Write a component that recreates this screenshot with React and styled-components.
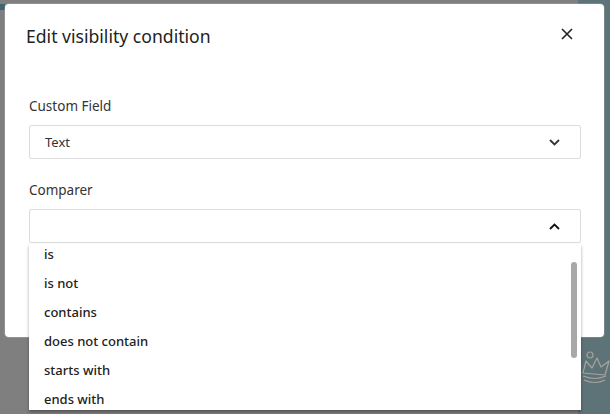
import React from "react";
import styled, { createGlobalStyle } from "styled-components";

const Global = createGlobalStyle`
  html, body { margin: 0; padding: 0; }
  body {
    width: 610px;
    height: 414px;
    overflow: hidden;
    font-family: "Noto Sans", "Open Sans", sans-serif;
    background: #7f7f7f;
  }
`;

const Page = styled.div`
  position: relative;
  width: 610px;
  height: 414px;
  display: flex;
  overflow: hidden;
`;

const MainArea = styled.div`
  flex: 1;
  background: #7f7f7f;
  position: relative;
`;

const LeftAccent = styled.div`
  width: 5px;
  height: 6px;
  margin-top: 4px;
  background: #3f6670;
`;

const SidePanel = styled.div`
  width: 32px;
  background: #5e7378;
  display: flex;
  flex-direction: column;
  align-items: flex-end;
  padding-top: 349px;
  box-sizing: border-box;
`;

const Modal = styled.div`
  position: absolute;
  left: 5px;
  top: 4px;
  width: 599px;
  height: 333px;
  background: #fff;
  border-radius: 4px;
  box-shadow: 0 0 0 1px rgba(255,255,255,0.15);
  display: flex;
  flex-direction: column;
`;

const Header = styled.div`
  display: flex;
  align-items: center;
  justify-content: space-between;
  padding: 19px 30px 20px 21px;
`;

const Title = styled.h2`
  margin: 0;
  font-size: 17.6px;
  line-height: 27px;
  font-weight: 400;
  color: #222;
`;

const CloseButton = styled.button`
  border: 0;
  background: none;
  padding: 0;
  width: 14px;
  height: 14px;
  display: flex;
  align-items: center;
  justify-content: center;
  margin-top: -6px;
  cursor: pointer;
`;

const Body = styled.div`
  padding: 26px 23px 0 24px;
  display: flex;
  flex-direction: column;
`;

const Field = styled.div`
  display: flex;
  flex-direction: column;
  margin-bottom: ${(p) => p.$mb || 0}px;
  position: relative;
`;

const Label = styled.label`
  font-size: 13.5px;
  line-height: 20px;
  color: #333;
  margin-bottom: 9px;
`;

const SelectBox = styled.div`
  height: 34px;
  box-sizing: border-box;
  border: 1px solid #dcdcdc;
  border-radius: 2px;
  display: flex;
  align-items: center;
  justify-content: space-between;
  padding: 0 20px 0 15px;
  font-size: 13px;
  color: #333;
`;

const Menu = styled.div`
  position: absolute;
  left: 0;
  right: 0;
  top: 64px;
  height: 166px;
  background: #fff;
  box-shadow: 0 2px 3px rgba(0,0,0,0.35);
  overflow: hidden;
  z-index: 2;
`;

const MenuList = styled.ul`
  list-style: none;
  margin: 0;
  padding: 0;
  transform: translateY(-4px);
`;

const MenuItem = styled.li`
  height: 29px;
  line-height: 29px;
  padding-left: 15px;
  font-size: 13px;
  font-weight: 500;
  color: #222;
`;

const ScrollThumb = styled.div`
  position: absolute;
  right: 4px;
  top: 18px;
  width: 6px;
  height: 96px;
  border-radius: 3px;
  background: #a8a8a8;
`;

const Chevron = ({ up, color = "#333" }) => (
  <svg width="11" height="7" viewBox="0 0 11 7">
    <path
      d={up ? "M1 6 L5.5 1.5 L10 6" : "M1 1 L5.5 5.5 L10 1"}
      fill="none"
      stroke={color}
      strokeWidth="1.8"
    />
  </svg>
);

const Crown = () => (
  <svg width="30" height="36" viewBox="0 0 30 36">
    <g fill="none" stroke="#a8a29c" strokeWidth="1.2" strokeLinejoin="round">
      <circle cx="10" cy="6" r="3" />
      <path d="M3 24 L6 12 L12 19 L17 9 L21 18 L29 12 L25 26 Z" />
      <path d="M3 27 Q15 32 26 27" />
      <path d="M4 31 Q15 36 25 31" />
    </g>
  </svg>
);

const options = ["is", "is not", "contains", "does not contain", "starts with", "ends with"];

export default function App() {
  return (
    <>
      <Global />
      <Page>
        <MainArea>
          <LeftAccent />
        </MainArea>
        <SidePanel>
          <Crown />
        </SidePanel>
        <Modal>
          <Header>
            <Title>Edit visibility condition</Title>
            <CloseButton aria-label="Close">
              <svg width="12" height="12" viewBox="0 0 12 12">
                <path d="M1 1 L11 11 M11 1 L1 11" stroke="#222" strokeWidth="1.6" />
              </svg>
            </CloseButton>
          </Header>
          <Body>
            <Field $mb={21}>
              <Label>Custom Field</Label>
              <SelectBox>
                <span>Text</span>
                <Chevron />
              </SelectBox>
            </Field>
            <Field>
              <Label>Comparer</Label>
              <SelectBox>
                <span></span>
                <Chevron up color="#111" />
              </SelectBox>
              <Menu>
                <MenuList>
                  {options.map((o) => (
                    <MenuItem key={o}>{o}</MenuItem>
                  ))}
                </MenuList>
                <ScrollThumb />
              </Menu>
            </Field>
          </Body>
        </Modal>
      </Page>
    </>
  );
}
